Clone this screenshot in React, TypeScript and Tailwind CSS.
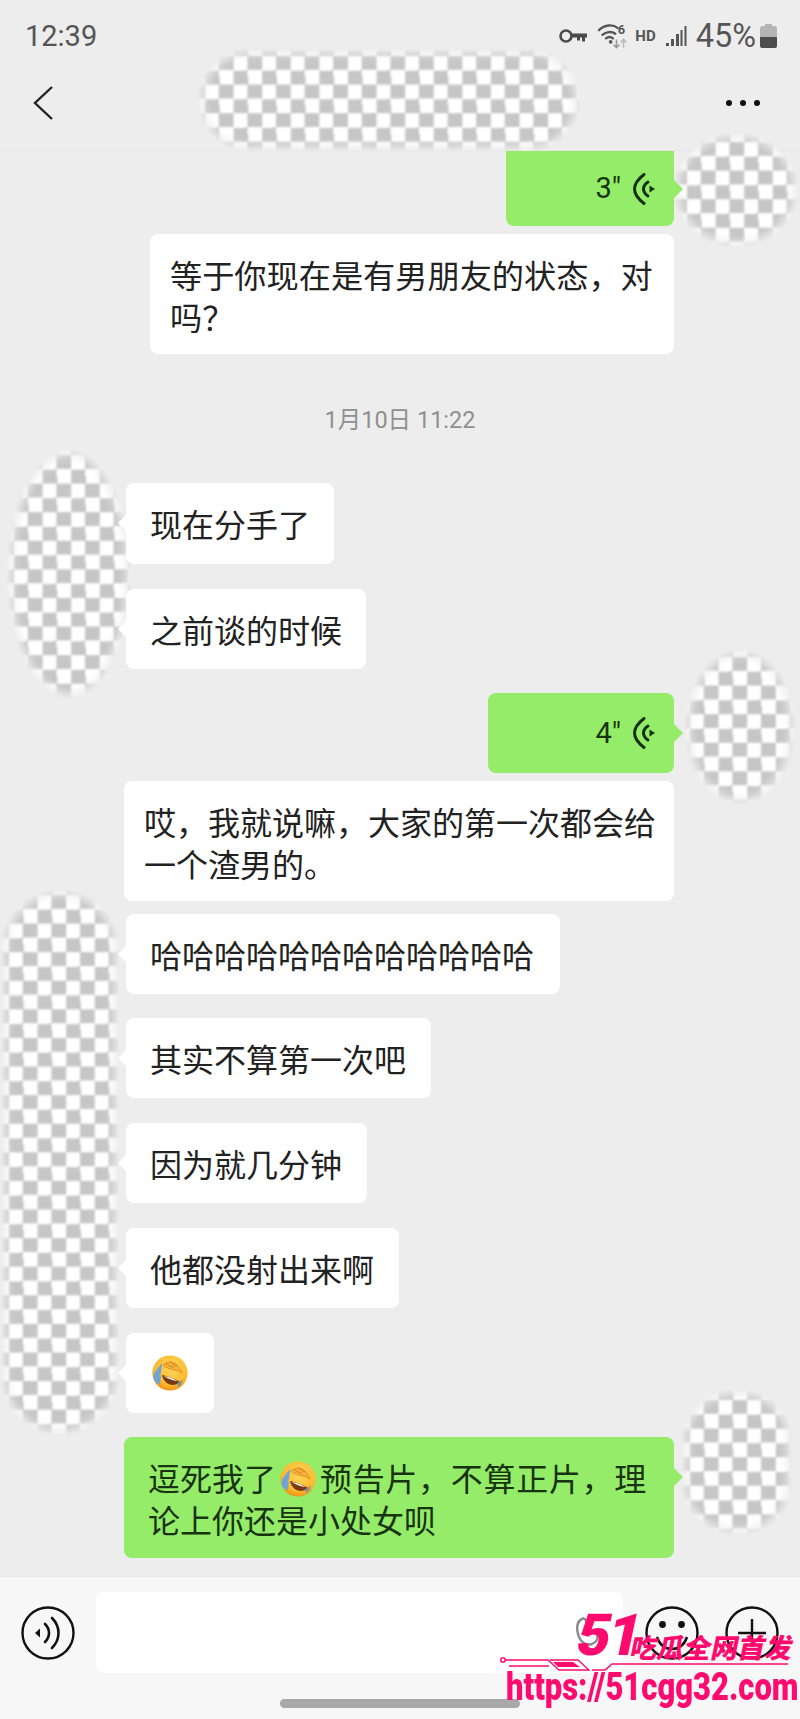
import React from "react";

const CJK = "font-['Noto_Sans_CJK_SC','Noto_Sans',sans-serif]";

function Blob({ className }: { className: string }) {
  return (
    <div className={"absolute z-0 overflow-hidden bg-[conic-gradient(#c6c6c6_25%,#fff_0_50%,#c6c6c6_0_75%,#fff_0)] bg-[length:28.6px_28.6px] blur-[0.8px] " + className}>
      <div className="h-full w-full rounded-[inherit] shadow-[inset_0_0_9px_4px_#ededed]" />
    </div>
  );
}

function CryEmoji({ className }: { className: string }) {
  return (
    <svg viewBox="0 0 36 36" className={className}>
      <defs>
        <radialGradient id="ef" cx="55%" cy="35%" r="70%">
          <stop offset="0%" stopColor="#ffd65c" />
          <stop offset="70%" stopColor="#fcb92c" />
          <stop offset="100%" stopColor="#ee8512" />
        </radialGradient>
      </defs>
      <circle cx="18" cy="18" r="17.600" fill="url(#ef)" />
      <path d="M11 10c3-3 9-4 13-1 2 2 5 5 6 9-3-2-5-3-8-3-4-1-8-2-11-5z" fill="#f6b13a" stroke="#d98a1c" strokeWidth="0.8" />
      <path d="M14 8c2 2 5 4 8 4M18 6c2 2 4 4 7 5" stroke="#c9801d" strokeWidth="0.9" fill="none" />
      <path d="M10 20c5 1 12 3 18 7-3 2.500-7 3.500-10 2.500-4-1-7-5-8-9.500z" fill="#7a3b14" />
      <path d="M11.500 21c5 .5 10 2.500 14 5-4-.5-9-2-14-5z" fill="#fff" />
      <path d="M10 8C7 12 2 17 1.500 21c-.5 4 2.500 7 6 8.500 1-3 1.500-7 1-10C9 16 10 12 10 8z" fill="#6fa4d6" />
      <path d="M25 28c2-1 4-2 6-4l-2 6-3 2z" fill="#5b8fb0" opacity="0.75" />
    </svg>
  );
}

function VoiceGlyph() {
  return (
    <svg viewBox="0 0 24 32" className="h-[32px] w-[24px]">
      <path d="M12 1.500C5 7 2.500 11 2.500 16s2.500 9 9.500 14.500" fill="none" stroke="#14300f" strokeWidth="3" strokeLinecap="round" />
      <path d="M16 9c-3 2-4.500 4.500-4.500 7s1.500 5 4.500 7" fill="none" stroke="#14300f" strokeWidth="3" strokeLinecap="round" />
      <path d="M17.500 12.500l5.500 3.500-5.500 3.500z" fill="#14300f" />
    </svg>
  );
}

function Left({ text, w, mt, h }: { text: string; w: string; mt: string; h?: string }) {
  return (
    <div className={`relative self-start ml-[126px] rounded-lg bg-white px-6 text-[32px] leading-[80px] text-[#222] whitespace-nowrap ${h ?? "h-[80px]"} ${w} ${mt}`}>
      <span className="absolute left-[-8px] top-[31px] h-0 w-0 border-y-[9px] border-r-[9px] border-y-transparent border-r-white" />
      {text}
    </div>
  );
}

function Voice({ sec, className }: { sec: string; className: string }) {
  return (
    <div className={`relative self-end mr-[126px] flex items-center justify-end gap-[11px] bg-[#95ec69] pr-[18px] ${className}`}>
      <span className="font-['Roboto',sans-serif] text-[29px] leading-none text-[#17330f]">{sec}</span>
      <VoiceGlyph />
      <span className="absolute right-[-9px] top-1/2 -mt-[9px] h-0 w-0 border-y-[9px] border-l-[9px] border-y-transparent border-l-[#95ec69]" />
    </div>
  );
}

export default function App() {
  return (
    <div className={`relative flex h-[1719px] w-[800px] flex-col overflow-hidden bg-[#ededed] ${CJK}`}>
      {/* Header */}
      <header className="h-[151px] shrink-0 border-b border-[#e6e6e6] px-[25px]">
        <div className="flex h-[72px] items-center text-[#555]">
          <span className="font-['Roboto',sans-serif] text-[29px] leading-none">12:39</span>
          <div className="ml-auto mr-[-2px] flex items-center">
            <svg viewBox="0 0 28 16" className="h-[16px] w-[28px]">
              <circle cx="7" cy="8" r="5.500" fill="none" stroke="#4a4a4a" strokeWidth="2.600" />
              <path d="M12 5.500h16v4h-2v4h-3v-4h-2v3h-3v-3h-6z" fill="#4a4a4a" />
            </svg>
            <svg viewBox="0 0 26 24" className="ml-[10px] h-[28px] w-[32px]">
              <path d="M1 7c5-5 12-5 16-2M4 11c3-3 8-3 11-1M7 14c2-1.500 4-1.500 6 0" fill="none" stroke="#555" strokeWidth="2" strokeLinecap="round" />
              <circle cx="11" cy="17" r="1.600" fill="#555" />
              <text x="17" y="10" fontSize="11" fontWeight="700" fill="#555" fontFamily="Roboto">6</text>
              <path d="M16 15v7M13.500 19.500l2.500 2.500 2.500-2.500" fill="none" stroke="#999" strokeWidth="1.400" />
              <path d="M22 22v-7M19.500 17.500l2.500-2.500 2.500 2.500" fill="none" stroke="#bbb" strokeWidth="1.400" />
            </svg>
            <span className="ml-[6px] font-['Roboto',sans-serif] text-[15px] font-bold leading-none text-[#555]">HD</span>
            <svg viewBox="0 0 22 22" className="ml-[9px] h-[22px] w-[22px]">
              <path d="M1 18h3v3H1zM6 14h3v7H6zM11 9h3v12h-3z" fill="#555" />
              <path d="M15.500 5h2v16h-2zM19.500 1h2v20h-2z" fill="#555" />
            </svg>
            <span className="ml-[9px] font-['Roboto',sans-serif] text-[32.5px] leading-none">45%</span>
            <svg viewBox="0 0 17 24" className="ml-[4px] h-[24px] w-[17px]">
              <path d="M5 0h7v2H5z" fill="#b5b5b5" />
              <rect x="0" y="2" width="17" height="22" rx="2.500" fill="#b5b5b5" />
              <path d="M0 13h17v8.500a2.500 2.500 0 0 1-2.500 2.500h-12A2.500 2.500 0 0 1 0 21.500z" fill="#4d4d4d" />
            </svg>
          </div>
        </div>
        <div className="flex h-[62px] items-center justify-between">
          <svg viewBox="0 0 22 36" className="ml-[7px] h-[36px] w-[22px]">
            <path d="M20 2L3 18l17 16" fill="none" stroke="#222" strokeWidth="2.400" />
          </svg>
          <div className="mr-[15px] flex gap-[8px]">
            <span className="h-[6px] w-[6px] rounded-full bg-[#111]" />
            <span className="h-[6px] w-[6px] rounded-full bg-[#111]" />
            <span className="h-[6px] w-[6px] rounded-full bg-[#111]" />
          </div>
        </div>
      </header>

      {/* Masked names and avatars */}
      <Blob className="left-[199px] top-[50px] h-[100px] w-[380px] rounded-[50px] bg-[position:6px_6px]" />
      <Blob className="left-[675px] top-[134px] h-[112px] w-[122px] rounded-[50%] bg-[position:12px_8px]" />
      <Blob className="left-[8px] top-[451px] h-[246px] w-[122px] rounded-[50%] bg-[position:6px_4px]" />
      <Blob className="left-[686px] top-[651px] h-[152px] w-[108px] rounded-[50%] bg-[position:4px_6px]" />
      <Blob className="left-[2px] top-[891px] h-[543px] w-[116px] rounded-[58px] bg-[position:7px_4px]" />
      <Blob className="left-[683px] top-[1391px] h-[142px] w-[108px] rounded-[50px] bg-[position:7px_9px]" />

      {/* Chat */}
      <main className="relative z-10 flex min-h-0 flex-1 flex-col">
        <Voice sec={'3"'} className="h-[75px] w-[168px] rounded-b-lg" />
        <div className="mt-2 self-end mr-[126px] w-[524px] rounded-lg bg-white pb-[17px] pl-[20px] pr-[18px] pt-[19px] text-[32.2px] leading-[42px] text-[#222]">
          等于你现在是有男朋友的状态，对吗？
        </div>
        <div className="mt-[51px] self-center text-center font-['Roboto','Noto_Sans_CJK_SC',sans-serif] text-[23.5px] leading-[30px] text-[#8f8f8f]">
          1月10日 11:22
        </div>
        <Left text="现在分手了" w="w-[208px]" mt="mt-[48px]" h="h-[81px]" />
        <Left text="之前谈的时候" w="w-[240px]" mt="mt-[25px]" />
        <Voice sec={'4"'} className="mt-6 h-[80px] w-[186px] rounded-lg" />
        <div className="mt-2 self-end mr-[126px] w-[550px] rounded-lg bg-white pb-[17px] pl-[20px] pr-[18px] pt-[19px] text-[32px] leading-[42px] text-[#222]">
          哎，我就说嘛，大家的第一次都会给一个渣男的。
        </div>
        <Left text="哈哈哈哈哈哈哈哈哈哈哈哈" w="w-[434px]" mt="mt-[13px]" />
        <Left text="其实不算第一次吧" w="w-[305px]" mt="mt-[24px]" />
        <Left text="因为就几分钟" w="w-[241px]" mt="mt-[25px]" />
        <Left text="他都没射出来啊" w="w-[273px]" mt="mt-[25px]" />
        <div className="relative ml-[126px] mt-[25px] flex h-[80px] w-[88px] items-center justify-center self-start rounded-lg bg-white">
          <span className="absolute left-[-8px] top-[31px] h-0 w-0 border-y-[9px] border-r-[9px] border-y-transparent border-r-white" />
          <CryEmoji className="h-[36px] w-[36px]" />
        </div>
        <div className="relative mr-[126px] mt-[24px] w-[550px] self-end rounded-lg bg-[#95ec69] px-6 pb-[18px] pt-[19px] text-[32px] leading-[42px] text-[#17330f]">
          <span className="absolute right-[-9px] top-[31px] h-0 w-0 border-y-[9px] border-l-[9px] border-y-transparent border-l-[#95ec69]" />
          逗死我了<CryEmoji className="mx-[4px] inline-block h-[36px] w-[36px] align-[-6px]" /><span className="tracking-[0.7px]">预告片，不算正片，理</span>论上你还是小处女呗
        </div>
      </main>

      {/* Input bar */}
      <footer className="relative flex h-[143px] shrink-0 flex-col border-t border-[#e8e8e8] bg-[#f7f7f7]">
        <div className="mt-[15px] flex h-[81px] items-center pl-[21px]">
          <svg viewBox="0 0 54 54" className="h-[54px] w-[54px]">
            <circle cx="27" cy="27" r="25.500" fill="none" stroke="#111" strokeWidth="2.400" />
            <path d="M14 27l5-4.500v9z" fill="#111" />
            <path d="M24 18c3 3 4 6 4 9s-1 6-4 9" fill="none" stroke="#111" strokeWidth="2.600" strokeLinecap="round" />
            <path d="M31 12c5 5 6.500 10 6.500 15s-1.500 10-6.500 15" fill="none" stroke="#111" strokeWidth="2.600" strokeLinecap="round" />
          </svg>
          <div className="relative ml-[21px] h-[81px] w-[527px] rounded-lg bg-white">
            <svg viewBox="0 0 26 32" className="absolute left-[478px] top-[24px] h-[32px] w-[26px]">
              <path d="M10 2c-6 2-8 8-6 16 2 8 8 12 14 10 5-2 6-6 5-9-1-2-4-3-6-2" fill="none" stroke="#8a8a8a" strokeWidth="2.400" />
              <path d="M10 2c3 3 4 8 4 14" fill="none" stroke="#8a8a8a" strokeWidth="2.400" />
            </svg>
          </div>
          <svg viewBox="0 0 54 54" className="ml-[22px] h-[54px] w-[54px]">
            <circle cx="27" cy="27" r="25.500" fill="none" stroke="#111" strokeWidth="2.400" />
            <circle cx="17.500" cy="18.500" r="3.400" fill="#111" />
            <circle cx="36.500" cy="18.500" r="3.400" fill="#111" />
            <path d="M12 31c3 9 9 12 15 12s12-3 15-12" fill="none" stroke="#111" strokeWidth="2.400" />
          </svg>
          <svg viewBox="0 0 54 54" className="ml-[26px] h-[54px] w-[54px]">
            <circle cx="27" cy="27" r="25.500" fill="none" stroke="#111" strokeWidth="2.400" />
            <path d="M27 13v28M13 27h28" stroke="#111" strokeWidth="2.400" />
          </svg>
        </div>
        <div className="ml-[280px] mt-[26px] h-[9px] w-[240px] rounded-full bg-[#a8a8a8]" />
      </footer>

      {/* Watermark */}
      <div className="absolute left-[500px] top-[1605px] z-20 h-[110px] w-[300px] text-[#ff0a6e]">
        <span className="absolute left-[78px] top-[-10px] -skew-x-12 font-['Roboto',sans-serif] text-[58px] font-black leading-[80px] tracking-[-3px]">51</span>
        <span className="absolute left-[131px] top-[26px] whitespace-nowrap -skew-x-12 text-[27px] font-black leading-[32px]">吃瓜全网首发</span>
        <svg viewBox="0 0 290 18" className="absolute left-0 top-[52px] h-[18px] w-[290px]">
          <circle cx="3" cy="3" r="2.200" fill="none" stroke="#ff0a6e" strokeWidth="1.500" />
          <path d="M5 3h43l11 10h30l-11-10H50M9 9h40" fill="none" stroke="#ff0a6e" strokeWidth="1.300" />
          <path d="M53 5h20l7 5H58z" fill="#ff0a6e" />
          <path d="M92 13h13l7-6h176" fill="none" stroke="#ff0a6e" strokeWidth="1.600" />
        </svg>
        <span className="absolute left-[6px] top-[60px] origin-left scale-x-[0.815] whitespace-nowrap font-['Roboto',sans-serif] text-[38px] font-black leading-[44px]">https://51cgg32.com</span>
      </div>
    </div>
  );
}
